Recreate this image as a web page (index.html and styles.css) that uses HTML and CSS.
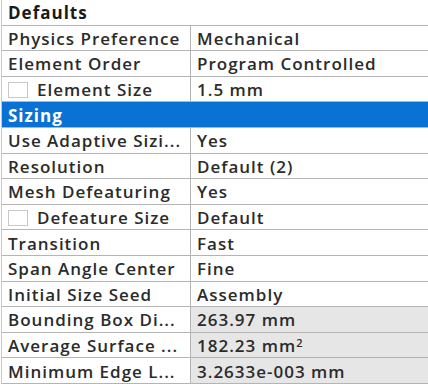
FILE: index.html
```html
<!DOCTYPE html>
<html lang="en">
<head>
    <meta charset="UTF-8">
    <title>Details</title>
    <link rel="stylesheet" href="styles.css">
</head>
<body>
    <div class="details">
        <div class="group">Defaults</div>
        <div class="row"><div class="label">Physics Preference</div><div class="value">Mechanical</div></div>
        <div class="row"><div class="label">Element Order</div><div class="value">Program Controlled</div></div>
        <div class="row"><div class="label"><span class="check"></span>Element Size</div><div class="value">1.5 mm</div></div>
        <div class="group selected">Sizing</div>
        <div class="row"><div class="label">Use Adaptive Sizi...</div><div class="value">Yes</div></div>
        <div class="row"><div class="label">Resolution</div><div class="value">Default (2)</div></div>
        <div class="row"><div class="label">Mesh Defeaturing</div><div class="value">Yes</div></div>
        <div class="row"><div class="label"><span class="check"></span>Defeature Size</div><div class="value">Default</div></div>
        <div class="row"><div class="label">Transition</div><div class="value">Fast</div></div>
        <div class="row"><div class="label">Span Angle Center</div><div class="value">Fine</div></div>
        <div class="row"><div class="label">Initial Size Seed</div><div class="value">Assembly</div></div>
        <div class="row readonly"><div class="label">Bounding Box Di...</div><div class="value">263.97 mm</div></div>
        <div class="row readonly"><div class="label">Average Surface ...</div><div class="value">182.23 mm<sup>2</sup></div></div>
        <div class="row readonly"><div class="label">Minimum Edge L...</div><div class="value">3.2633e-003 mm</div></div>
    </div>
</body>
</html>
```
FILE: styles.css
```css
body {
    margin: 0;
    background: #ffffff;
    font-family: "Open Sans", "Noto Sans", sans-serif;
    font-weight: 600;
    font-size: 17px;
    letter-spacing: 1px;
    color: #2b2b2b;
    overflow: hidden;
}

.details {
    width: 440px;
    border-left: 1px solid #c8c8c8;
    margin-left: 1px;
}

.group,
.row {
    box-sizing: border-box;
    height: 25.6px;
    border-bottom: 1px solid #b4b4b4;
}

.group {
    display: flex;
    align-items: center;
    padding: 1px 0 0 6px;
    font-weight: 700;
    color: #1a1a1a;
}

.group.selected {
    background: #0a72d4;
    color: #ffffff;
}

.row {
    display: flex;
}

.label {
    width: 189px;
    flex: none;
    display: flex;
    align-items: center;
    padding: 1px 0 0 6px;
    box-sizing: border-box;
    border-right: 1px solid #b4b4b4;
    white-space: nowrap;
    overflow: hidden;
}

.value {
    flex: 1;
    display: flex;
    align-items: center;
    padding: 1px 0 0 6px;
    white-space: nowrap;
}

.readonly .value {
    background: #e6e6e6;
}

.check {
    width: 20px;
    height: 16px;
    box-sizing: border-box;
    border: 1px solid #c8c8c8;
    background: #ffffff;
    margin-right: 9px;
    flex: none;
}

sup {
    font-size: 11px;
    align-self: flex-start;
    margin-top: 1px;
}
```
